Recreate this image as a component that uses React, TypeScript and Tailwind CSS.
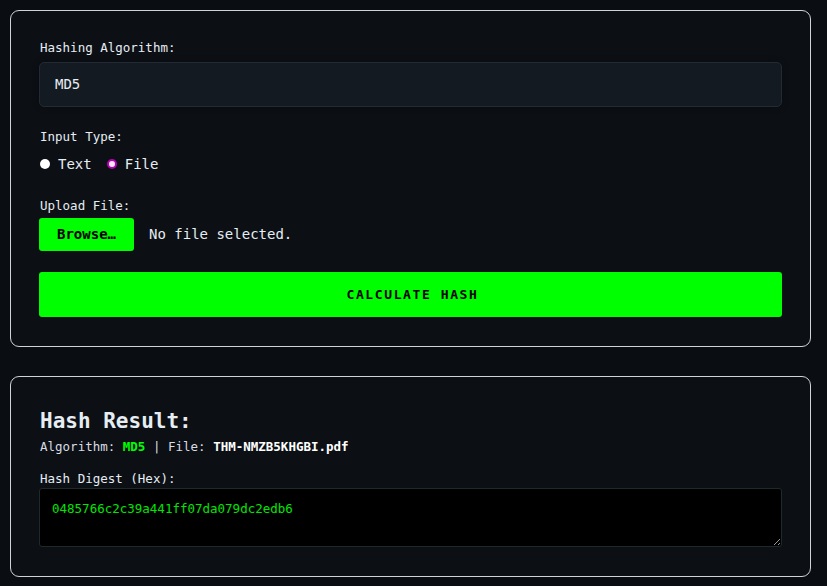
import React from "react";

export default function App() {
  const mono = { fontFamily: '"DejaVu Sans Mono", "Liberation Mono", monospace' };
  return (
    <div
      className="min-h-[586px] w-full bg-[#0a0d12] pl-[10px] pr-[16px] pt-[10px] text-[#e6edf3]"
      style={mono}
    >
      <div className="rounded-[9px] border border-[#d0d4d9] bg-[#0c1015] px-[28px] pt-[28px] pb-[29px]">
        <div className="pl-[1px] text-[12.5px] leading-[18px]">Hashing Algorithm:</div>
        <div className="mt-[5px] flex h-[45px] items-center rounded-[5px] border border-[#222a33] bg-[#141a22] px-[15px] text-[14px] shadow-[0_0_6px_rgba(0,0,0,0.4)]">
          MD5
        </div>

        <div className="mt-[21px] pl-[1px] text-[12.5px] leading-[18px]">Input Type:</div>
        <div className="mt-[8px] flex items-center pl-[1px] text-[14px] leading-[20px]">
          <span className="mr-[8px] inline-block h-[10px] w-[10px] rounded-full bg-white" />
          <span>Text</span>
          <span className="ml-[15px] mr-[8px] inline-block h-[10px] w-[10px] rounded-full border-[2px] border-[#b300b3] bg-[#f5e6f5]" />
          <span>File</span>
        </div>

        <div className="mt-[23px] pl-[1px] text-[12.5px] leading-[18px]">Upload File:</div>
        <div className="mt-[3px] flex items-center">
          <div className="flex h-[33px] w-[95px] items-center justify-center rounded-[3px] bg-[#00ff00] text-[14px] font-bold text-black">
            Browse…
          </div>
          <span className="ml-[15px] text-[14px]">No file selected.</span>
        </div>

        <div className="mt-[21px] flex h-[45px] items-center justify-center rounded-[3px] bg-[#00ff00] pl-[4px] text-[13px] font-bold tracking-[1.6px] text-black">
          CALCULATE HASH
        </div>
      </div>

      <div className="mt-[29px] rounded-[9px] border border-[#d0d4d9] bg-[#0c1015] px-[28px] pt-[28px] pb-[29px]">
        <div className="pl-[1px] text-[21px] font-bold leading-[32px]">Hash Result:</div>
        <div className="mt-[1px] pl-[1px] text-[12.5px] leading-[18px] text-[#d8dde3]">
          Algorithm: <span className="font-bold text-[#00ff00]">MD5</span> | File:{" "}
          <span className="font-bold text-white">THM-NMZB5KHGBI.pdf</span>
        </div>
        <div className="mt-[14px] pl-[1px] text-[12.5px] leading-[18px]">Hash Digest (Hex):</div>
        <textarea
          readOnly
          value="0485766c2c39a441ff07da079dc2edb6"
          className="block h-[59px] w-full resize rounded-[3px] border border-[#1c2a2a] bg-black px-[12px] py-[12px] text-[12.5px] leading-[16px] text-[#00e600] outline-none"
          style={mono}
        />
      </div>
    </div>
  );
}
